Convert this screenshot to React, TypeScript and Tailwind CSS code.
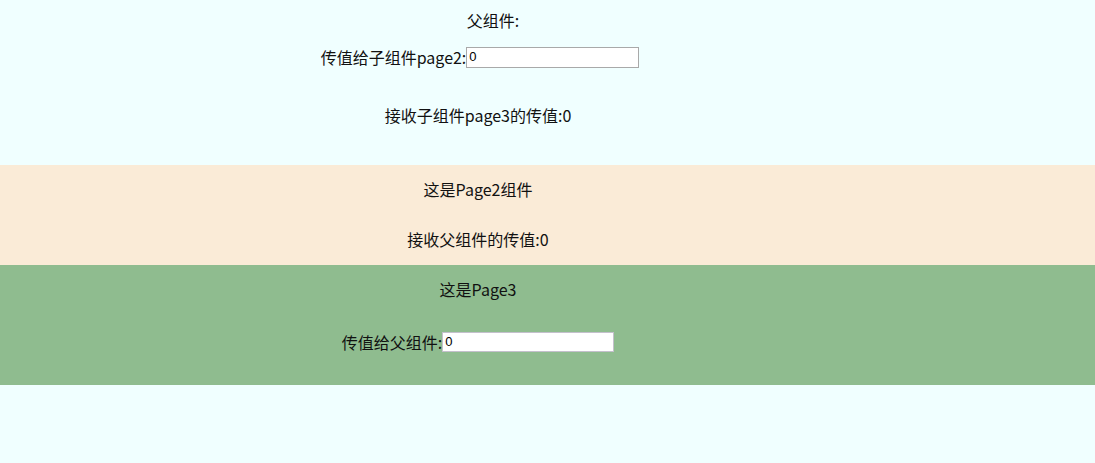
import React, { useState } from "react";

const font = { fontFamily: '"Noto Sans CJK SC", "Noto Sans", sans-serif' };

export default function App() {
  const [toChild, setToChild] = useState("0");
  const [toParent, setToParent] = useState("0");

  return (
    <div
      className="min-h-[463px] w-full bg-[#f0ffff] text-[16px] leading-[22px] text-[#111]"
      style={font}
    >
      {/* Parent */}
      <div className="h-[165px] w-full">
        <div className="flex w-[956px] flex-col items-center">
          <div className="mt-[9px] h-[22px] pl-[30px]">父组件:</div>
          <div className="mt-[15px] flex h-[22px] items-center pl-[4px]">
            <span>传值给子组件page2:</span>
            <input
              value={toChild}
              onChange={(e) => setToChild(e.target.value)}
              className="h-[21px] w-[173px] border border-[#a9a9a9] bg-white px-[2px] text-[13px] text-black outline-none"
              style={{ fontFamily: '"Liberation Sans", sans-serif' }}
            />
          </div>
          <div className="mt-[36px] h-[22px]">接收子组件page3的传值:{toParent}</div>
        </div>
      </div>

      {/* Page2 */}
      <div className="h-[100px] w-full bg-[#faebd7]">
        <div className="flex w-[956px] flex-col items-center">
          <div className="mt-[13px] h-[22px]">这是Page2组件</div>
          <div className="mt-[28px] h-[22px]">接收父组件的传值:{toChild}</div>
        </div>
      </div>

      {/* Page3 */}
      <div className="h-[120px] w-full bg-[#8fbc8f]">
        <div className="flex w-[956px] flex-col items-center">
          <div className="mt-[13px] h-[22px]">这是Page3</div>
          <div className="mt-[31px] flex h-[22px] items-center">
            <span>传值给父组件:</span>
            <input
              value={toParent}
              onChange={(e) => setToParent(e.target.value)}
              className="h-[20px] w-[172px] border border-[#c4c0cc] bg-white px-[2px] text-[13px] text-black outline-none"
              style={{ fontFamily: '"Liberation Sans", sans-serif' }}
            />
          </div>
        </div>
      </div>
    </div>
  );
}
